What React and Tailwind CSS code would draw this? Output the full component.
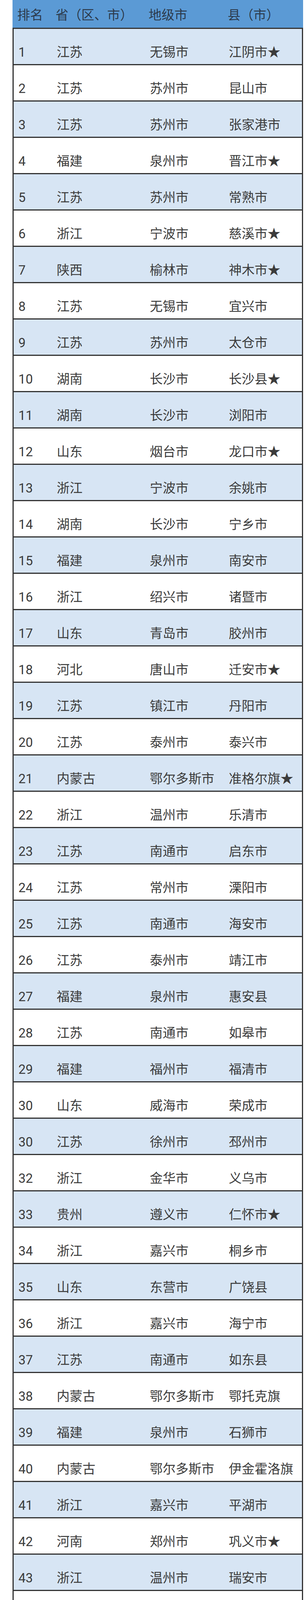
const rows = [
  ['1', '江苏', '无锡市', '江阴市★'],
  ['2', '江苏', '苏州市', '昆山市'],
  ['3', '江苏', '苏州市', '张家港市'],
  ['4', '福建', '泉州市', '晋江市★'],
  ['5', '江苏', '苏州市', '常熟市'],
  ['6', '浙江', '宁波市', '慈溪市★'],
  ['7', '陕西', '榆林市', '神木市★'],
  ['8', '江苏', '无锡市', '宜兴市'],
  ['9', '江苏', '苏州市', '太仓市'],
  ['10', '湖南', '长沙市', '长沙县★'],
  ['11', '湖南', '长沙市', '浏阳市'],
  ['12', '山东', '烟台市', '龙口市★'],
  ['13', '浙江', '宁波市', '余姚市'],
  ['14', '湖南', '长沙市', '宁乡市'],
  ['15', '福建', '泉州市', '南安市'],
  ['16', '浙江', '绍兴市', '诸暨市'],
  ['17', '山东', '青岛市', '胶州市'],
  ['18', '河北', '唐山市', '迁安市★'],
  ['19', '江苏', '镇江市', '丹阳市'],
  ['20', '江苏', '泰州市', '泰兴市'],
  ['21', '内蒙古', '鄂尔多斯市', '准格尔旗★'],
  ['22', '浙江', '温州市', '乐清市'],
  ['23', '江苏', '南通市', '启东市'],
  ['24', '江苏', '常州市', '溧阳市'],
  ['25', '江苏', '南通市', '海安市'],
  ['26', '江苏', '泰州市', '靖江市'],
  ['27', '福建', '泉州市', '惠安县'],
  ['28', '江苏', '南通市', '如皋市'],
  ['29', '福建', '福州市', '福清市'],
  ['30', '山东', '威海市', '荣成市'],
  ['30', '江苏', '徐州市', '邳州市'],
  ['32', '浙江', '金华市', '义乌市'],
  ['33', '贵州', '遵义市', '仁怀市★'],
  ['34', '浙江', '嘉兴市', '桐乡市'],
  ['35', '山东', '东营市', '广饶县'],
  ['36', '浙江', '嘉兴市', '海宁市'],
  ['37', '江苏', '南通市', '如东县'],
  ['38', '内蒙古', '鄂尔多斯市', '鄂托克旗'],
  ['39', '福建', '泉州市', '石狮市'],
  ['40', '内蒙古', '鄂尔多斯市', '伊金霍洛旗'],
  ['41', '浙江', '嘉兴市', '平湖市'],
  ['42', '河南', '郑州市', '巩义市★'],
  ['43', '浙江', '温州市', '瑞安市'],
  ['44', '河南', '许昌市', '长葛市'],
  ['45', '江西', '南昌市', '南昌县★'],
  ['46', '山东', '枣庄市', '滕州市'],
  ['47', '陕西', '榆林市', '府谷县'],
  ['48', '浙江', '台州市', '温岭市'],
  ['49', '浙江', '嘉兴市', '海盐县'],
];

const cols = 'grid grid-cols-[98px_238px_202px_1fr] pl-[12px]';

export default function App() {
  return (
    <div className="bg-white font-['Roboto','Noto_Sans_CJK_SC',sans-serif] text-[33px] leading-[33px]">
      <div className="ml-[32px] w-[743px]">
        {/* Header */}
        <div className={`${cols} h-[71px] pt-[22px] bg-[#5b9ad5] text-[#2c3a4c] px-[3px]`}>
          <span>排名</span>
          <span>省（区、市）</span>
          <span>地级市</span>
          <span>县（市）</span>
        </div>

        {/* Rows */}
        {rows.map((r, i) => (
          <div
            key={i}
            className={`border-x-[3px] border-t-[3px] border-[#333333] ${i % 2 === 0 ? 'bg-[#d7e5f4]' : 'bg-white'}`}
          >
            <div className={`${cols} h-[90px] pt-[43px] text-[#3b3b3b] whitespace-nowrap`}>
              <span>{r[0]}</span>
              <span>{r[1]}</span>
              <span>{r[2]}</span>
              <span>{r[3]}</span>
            </div>
          </div>
        ))}
        <div className="h-[9px] border-x-[3px] border-t-[3px] border-[#333333] bg-white" />
      </div>
    </div>
  );
}
